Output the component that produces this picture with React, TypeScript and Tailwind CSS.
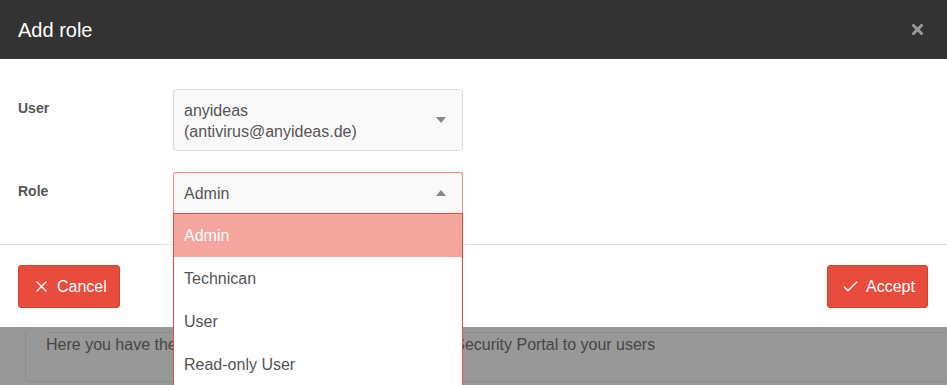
import { FC } from 'react';

const Caret: FC<{ up?: boolean }> = function ({ up }) {
  return (
    <svg width="10" height="6" viewBox="0 0 10 6" className="absolute right-[16px] top-1/2 -translate-y-1/2">
      <path d={up ? 'M0 6 L5 0 L10 6 Z' : 'M0 0 L10 0 L5 6 Z'} fill="#888" />
    </svg>
  );
};

const roles = ['Admin', 'Technican', 'User', 'Read-only User'];

const App: FC = function () {
  return (
    <div className="relative h-[385px] w-[947px] overflow-hidden bg-[#989898] font-['Liberation_Sans',Arial,sans-serif]">
      <div className="bg-white">
        <div className="flex h-[59px] items-center justify-between bg-[#333333] pl-[18px] pr-[24px]">
          <h2 className="text-[20px] leading-none text-white">Add role</h2>
          <svg width="11" height="11" viewBox="0 0 11 11">
            <path d="M1.5 1.5 L9.5 9.5 M9.5 1.5 L1.5 9.5" stroke="#9a9a9a" strokeWidth="3" strokeLinecap="square" />
          </svg>
        </div>

        <div className="flex flex-col gap-[21px] pt-[30px] pb-[31px] pl-[18px]">
          <div className="flex">
            <label className="w-[155px] pt-[9px] text-[14px] leading-[20px] font-bold text-[#555]">User</label>
            <div className="relative h-[62px] w-[290px] rounded-[3px] border border-[#dcdcdc] bg-[#f9f9f9] pt-[10px] pl-[10px] text-[16px] leading-[21px] text-[#555]">
              <div>anyideas</div>
              <div>(antivirus@anyideas.de)</div>
              <Caret />
            </div>
          </div>
          <div className="flex">
            <label className="w-[155px] pt-[9px] text-[14px] leading-[20px] font-bold text-[#555]">Role</label>
            <div className="relative h-[41px] w-[290px] rounded-t-[3px] border border-b-0 border-[#f28d84] bg-[#f9f9f9] pl-[10px] text-[16px] leading-[41px] text-[#555]">
              Admin
              <Caret up />
              <ul className="absolute top-[40px] -left-px z-10 w-[290px] border-x border-t border-[#e74c3c] bg-white">
                {roles.map((role, i) => (
                  <li
                    key={role}
                    className={
                      i === 0
                        ? 'h-[43px] bg-[#f3a59e] pl-[10px] leading-[43px] text-white'
                        : 'h-[43px] pl-[10px] leading-[43px] text-[#555]'
                    }
                  >
                    {role}
                  </li>
                ))}
              </ul>
            </div>
          </div>
        </div>

        <div className="flex h-[83px] items-start justify-between border-t border-[#e5e5e5] px-[18px] pt-[20px] pr-[19px]">
          <button
            type="button"
            className="flex h-[43px] w-[102px] items-center gap-[10px] rounded-[3px] border border-[#d94131] bg-[#e74c3c] pl-[17px] text-[16px] text-white"
          >
            <svg width="11" height="11" viewBox="0 0 11 11">
              <path d="M0.5 0.5 L10.5 10.5 M10.5 0.5 L0.5 10.5" stroke="white" strokeWidth="1.3" />
            </svg>
            Cancel
          </button>
          <button
            type="button"
            className="flex h-[43px] w-[101px] items-center gap-[8px] rounded-[3px] border border-[#d94131] bg-[#e74c3c] pl-[15px] text-[16px] text-white"
          >
            <svg width="15" height="11" viewBox="0 0 15 11">
              <path d="M0.8 5.5 L5 9.8 L14.2 0.6" stroke="white" strokeWidth="1.3" fill="none" />
            </svg>
            Accept
          </button>
        </div>
      </div>

      <div className="ml-[25px] h-[50px] rounded-bl-[4px] border-b border-l border-[#8c8c8c]">
        <div className="mt-[5px] ml-[20px] border-t border-[#8c8c8c] pt-px text-[16px] leading-[22px] text-[#464646]">
          Here you have the possibility to assign all the roles of the Security Portal to your users
        </div>
      </div>
    </div>
  );
};

export default App;
